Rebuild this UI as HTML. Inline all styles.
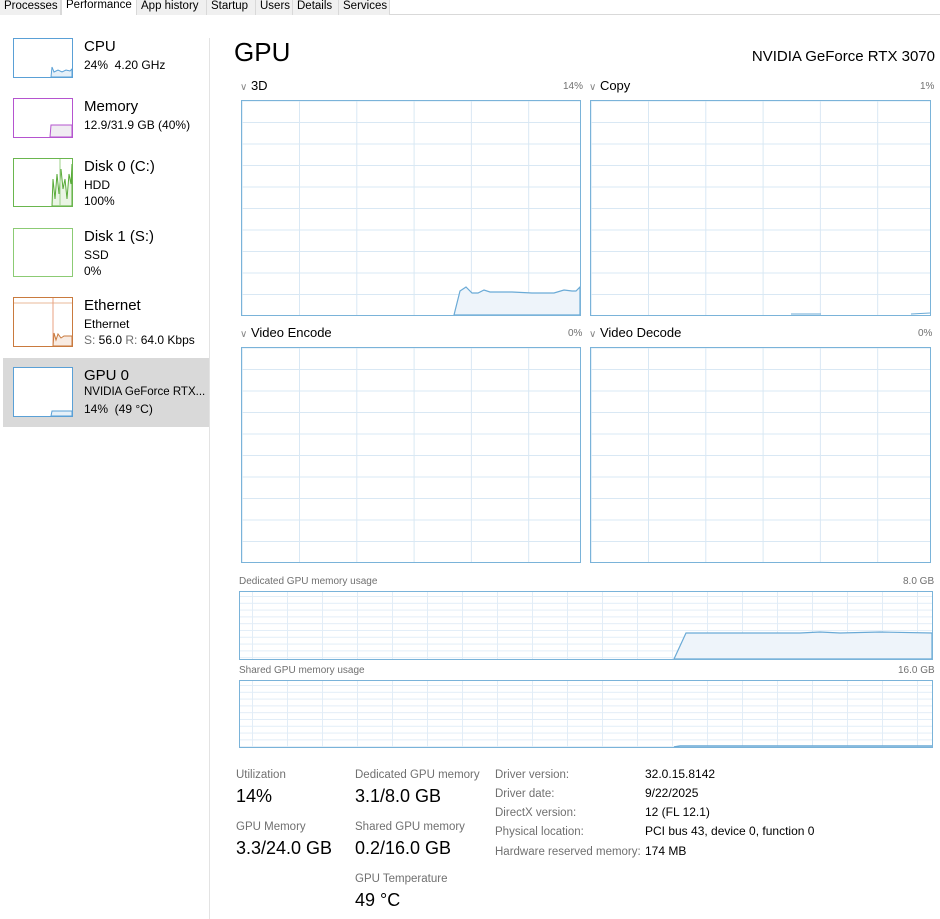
<!DOCTYPE html>
<html><head><meta charset="utf-8"><style>
*{margin:0;padding:0;box-sizing:border-box}
body{width:940px;height:919px;background:#fff;font-family:"Liberation Sans",sans-serif;color:#000;position:relative;overflow:hidden}
.a{position:absolute;white-space:nowrap}
.tabs{position:absolute;left:0;top:0;width:940px;height:15px;border-bottom:1px solid #d9d9d9;background:#fff}
.tab{position:absolute;top:0;height:15px;background:#f0f0f0;border-right:1px solid #d9d9d9;font-size:11.5px;line-height:13px;padding-left:4px;color:#000;overflow:hidden}
.tab.sel{background:#fff;top:-2px;height:17px;border:1px solid #d9d9d9;border-bottom:none}
.th{position:absolute;left:13px;width:60px;height:40px;border:1px solid}
.t1{font-size:15px;left:84px}
.t2{font-size:12px;left:84px}
.g{position:absolute;border:1px solid #7ab3d9;background-color:#fff}
.h{font-size:13px}
.p{font-size:10px;color:#707070}
.sm{font-size:10px;color:#707070}
.lab{font-size:11.5px;color:#707070;margin-top:2px}
.val{font-size:18px}
.kv{font-size:12px}
</style></head><body>
<div class="tabs">
<div class="tab" style="left:0;width:61px">Processes</div>
<div class="tab sel" style="left:61px;width:76px">Performance</div>
<div class="tab" style="left:137px;width:70px">App history</div>
<div class="tab" style="left:207px;width:49px">Startup</div>
<div class="tab" style="left:256px;width:37px">Users</div>
<div class="tab" style="left:293px;width:46px">Details</div>
<div class="tab" style="left:339px;width:51px">Services</div>
</div>
<div class="a" style="left:209px;top:38px;width:1px;height:881px;background:#e3e3e3"></div>
<div class="a" style="left:3px;top:358px;width:206px;height:69px;background:#d9d9d9"></div>

<div class="th" style="top:38px;border-color:#5aa0d6;background:#fff"><svg width="58" height="38" style="position:absolute"><path d="M37 38 L38 28 L40 33 L44 31 L48 33 L52 31 L56 32 L58 30 L58 38Z" fill="#e6f0f8" stroke="#5aa0d6" stroke-width="1"/></svg></div>
<div class="a t1" style="top:38px">CPU</div><div class="a t2" style="top:58px">24%&nbsp; 4.20 GHz</div>

<div class="th" style="top:98px;border-color:#b554cf;background:#fff"><svg width="58" height="38" style="position:absolute"><path d="M36 38 L37 26 L58 26 L58 38Z" fill="#f0ecf2" stroke="#b554cf"/></svg></div>
<div class="a t1" style="top:98px">Memory</div><div class="a t2" style="top:118px">12.9/31.9 GB (40%)</div>

<div class="th" style="top:158px;height:49px;border-color:#6ab64e;background:#fff"><svg width="58" height="47" style="position:absolute"><path d="M38 47 L39 20 L41 40 L43 15 L45 35 L47 10 L49 30 L51 20 L53 40 L55 15 L57 25 L58 5 L58 47Z" fill="#eaf5e4" stroke="#5aab3a"/><line x1="46" y1="0" x2="46" y2="47" stroke="#9cd08a"/></svg></div>
<div class="a t1" style="top:158px">Disk 0 (C:)</div><div class="a t2" style="top:178px">HDD</div><div class="a t2" style="top:194px">100%</div>

<div class="th" style="top:228px;height:49px;border-color:#8ccb74;background:#fff"></div>
<div class="a t1" style="top:228px">Disk 1 (S:)</div><div class="a t2" style="top:248px">SSD</div><div class="a t2" style="top:264px">0%</div>

<div class="th" style="top:297px;height:50px;border-color:#c97a3e;background:#fff"><svg width="58" height="48" style="position:absolute"><line x1="0" y1="5" x2="58" y2="5" stroke="#e8b898"/><line x1="39" y1="0" x2="39" y2="48" stroke="#e8a080"/><path d="M39 48 L40 35 L42 42 L44 36 L47 40 L50 38 L58 38 L58 48Z" fill="#f8ebe2" stroke="#c97a3e"/></svg></div>
<div class="a t1" style="top:297px">Ethernet</div><div class="a t2" style="top:317px">Ethernet</div><div class="a t2" style="top:333px"><span style="color:#707070">S:</span> 56.0 <span style="color:#707070">R:</span> 64.0 Kbps</div>

<div class="th" style="top:367px;height:50px;border-color:#5aa0d6;background:#fff"><svg width="58" height="48" style="position:absolute"><path d="M37 48 L38 43 L58 43 L58 48Z" fill="#e6f0f8" stroke="#5aa0d6"/></svg></div>
<div class="a t1" style="top:367px">GPU 0</div><div class="a t2" style="top:386px;font-size:11.5px">NVIDIA GeForce RTX...</div><div class="a t2" style="top:402px">14%&nbsp; (49 °C)</div>

<div class="a" style="left:234px;top:37px;font-size:26px">GPU</div>
<div class="a" style="right:5px;top:48px;font-size:15px">NVIDIA GeForce RTX 3070</div>

<div class="a h" style="left:240px;top:78px"><span style="color:#888;font-size:10px">∨</span> 3D</div>
<div class="a p" style="left:563px;top:81px">14%</div>
<div class="a h" style="left:589px;top:78px"><span style="color:#888;font-size:10px">∨</span> Copy</div>
<div class="a p" style="left:920px;top:81px">1%</div>
<div class="a h" style="left:240px;top:325px"><span style="color:#888;font-size:10px">∨</span> Video Encode</div>
<div class="a p" style="left:568px;top:328px">0%</div>
<div class="a h" style="left:589px;top:325px"><span style="color:#888;font-size:10px">∨</span> Video Decode</div>
<div class="a p" style="left:918px;top:328px">0%</div>

<div class="g" style="left:241px;top:100px;width:340px;height:216px;background-image:linear-gradient(90deg,#d9e8f4 1px,transparent 1px),linear-gradient(#d9e8f4 1px,transparent 1px);background-size:57.3px 100%,100% 21.5px;background-position:57px 0,0 21px"><svg width="338" height="214" style="position:absolute;left:0;top:0"><path d="M212 214 L218 190 L224 186 L230 192 L236 192 L242 189 L248 191 L270 191 L290 192 L312 192 L322 189 L330 190 L334 190 L338 186 L338 214Z" fill="#eef4fa" stroke="#6aaad6" stroke-width="1.2"/></svg></div>
<div class="g" style="left:590px;top:100px;width:341px;height:216px;background-image:linear-gradient(90deg,#d9e8f4 1px,transparent 1px),linear-gradient(#d9e8f4 1px,transparent 1px);background-size:57.3px 100%,100% 21.5px;background-position:57px 0,0 21px"><svg width="339" height="214" style="position:absolute"><path d="M200 213 L230 213 M320 213 L339 212" stroke="#6aaad6"/></svg></div>
<div class="g" style="left:241px;top:347px;width:340px;height:216px;background-image:linear-gradient(90deg,#d9e8f4 1px,transparent 1px),linear-gradient(#d9e8f4 1px,transparent 1px);background-size:57.3px 100%,100% 21.5px;background-position:57px 0,0 21px"></div>
<div class="g" style="left:590px;top:347px;width:341px;height:216px;background-image:linear-gradient(90deg,#d9e8f4 1px,transparent 1px),linear-gradient(#d9e8f4 1px,transparent 1px);background-size:57.3px 100%,100% 21.5px;background-position:57px 0,0 21px"></div>

<div class="a sm" style="left:239px;top:576px">Dedicated GPU memory usage</div>
<div class="a sm" style="left:903px;top:576px">8.0 GB</div>
<div class="g" style="left:239px;top:591px;width:694px;height:69px;background-image:linear-gradient(90deg,#e2edf7 1px,transparent 1px),linear-gradient(#e2edf7 1px,transparent 1px);background-size:35px 100%,100% 6.8px;background-position:12px 0,0 4px"><svg width="692" height="67" style="position:absolute"><path d="M434 67 L446 41 L560 41 L580 40 L600 41 L640 40 L692 41 L692 67Z" fill="#eef4fa" stroke="#6aaad6" stroke-width="1.2"/></svg></div>
<div class="a sm" style="left:239px;top:665px">Shared GPU memory usage</div>
<div class="a sm" style="left:898px;top:665px">16.0 GB</div>
<div class="g" style="left:239px;top:680px;width:694px;height:68px;background-image:linear-gradient(90deg,#e2edf7 1px,transparent 1px),linear-gradient(#e2edf7 1px,transparent 1px);background-size:35px 100%,100% 6.8px;background-position:12px 0,0 4px"><svg width="692" height="66" style="position:absolute"><path d="M434 66 L440 65 L692 65" fill="none" stroke="#6aaad6" stroke-width="1.5"/></svg></div>

<div class="a lab" style="left:236px;top:767px">Utilization</div>
<div class="a val" style="left:236px;top:786px">14%</div>
<div class="a lab" style="left:236px;top:819px">GPU Memory</div>
<div class="a val" style="left:236px;top:838px">3.3/24.0 GB</div>
<div class="a lab" style="left:355px;top:767px">Dedicated GPU memory</div>
<div class="a val" style="left:355px;top:786px">3.1/8.0 GB</div>
<div class="a lab" style="left:355px;top:819px">Shared GPU memory</div>
<div class="a val" style="left:355px;top:838px">0.2/16.0 GB</div>
<div class="a lab" style="left:355px;top:871px">GPU Temperature</div>
<div class="a val" style="left:355px;top:890px">49 °C</div>

<div class="a lab" style="left:495px;top:767px">Driver version:</div>
<div class="a lab" style="left:495px;top:786px">Driver date:</div>
<div class="a lab" style="left:495px;top:805px">DirectX version:</div>
<div class="a lab" style="left:495px;top:824px">Physical location:</div>
<div class="a lab" style="left:495px;top:844px">Hardware reserved memory:</div>
<div class="a kv" style="left:645px;top:767px">32.0.15.8142</div>
<div class="a kv" style="left:645px;top:786px">9/22/2025</div>
<div class="a kv" style="left:645px;top:805px">12 (FL 12.1)</div>
<div class="a kv" style="left:645px;top:824px">PCI bus 43, device 0, function 0</div>
<div class="a kv" style="left:645px;top:844px">174 MB</div>
</body></html>
